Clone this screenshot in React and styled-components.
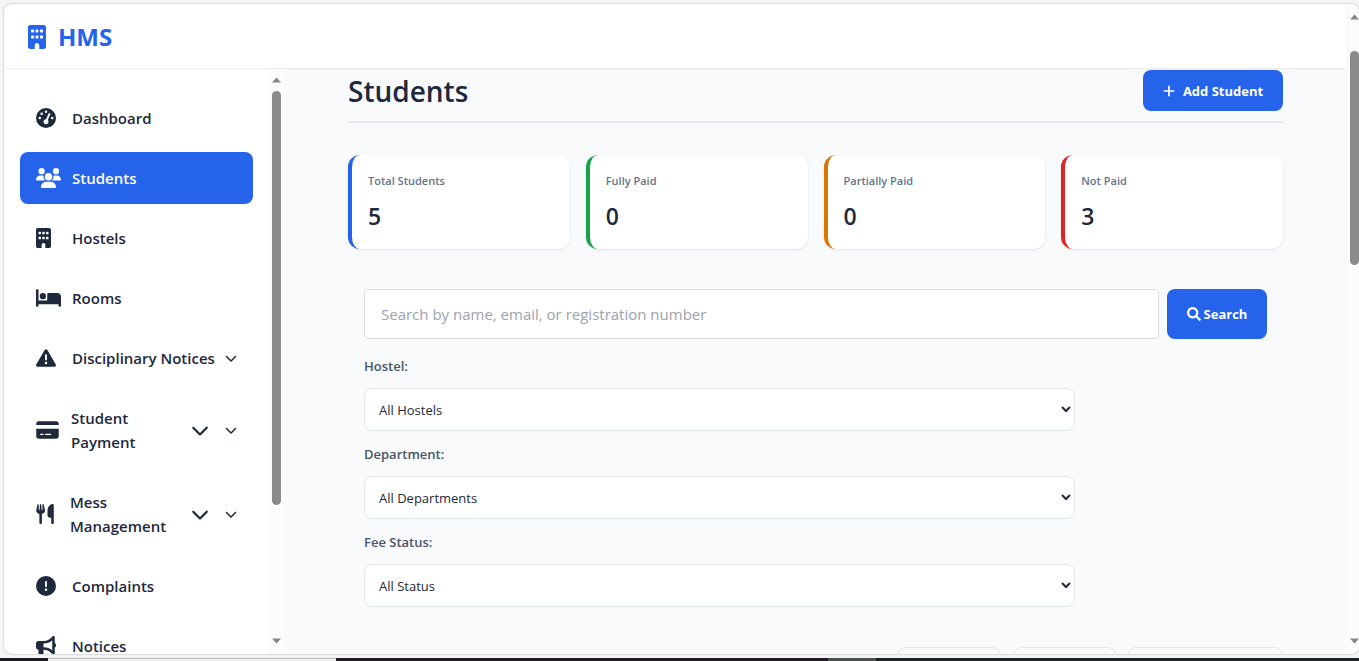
import React from "react";
import styled, { createGlobalStyle } from "styled-components";
import {
  FaBuilding, FaUsers, FaBed, FaTriangleExclamation, FaCreditCard, FaUtensils,
  FaCircleExclamation, FaBullhorn, FaChevronDown, FaPlus, FaGaugeHigh,
} from "react-icons/fa6";
import { FaSearch } from "react-icons/fa";

const GlobalStyle = createGlobalStyle`
  *, *::before, *::after { box-sizing: border-box; }
  body {
    margin: 0;
    background: #f5f5f5;
    color: #1e293b;
    font-family: "Open Sans", "Noto Sans", sans-serif;
    font-size: 15px;
    line-height: 24px;
  }
  button, input, select { font: inherit; color: inherit; }
`;

const Screen = styled.div`
  height: 100vh;
  display: flex;
  flex-direction: column;
  overflow: hidden;
`;

const Frame = styled.div`
  flex: 1;
  min-height: 0;
  margin: 4px 0 4px 4px;
  display: flex;
  background: #fff;
  border-radius: 8px;
  overflow: hidden;
  box-shadow: 0 0 2px rgba(0, 0, 0, 0.35);
`;

const Page = styled.div`
  flex: 1;
  min-width: 0;
  display: flex;
  flex-direction: column;
`;

const Header = styled.header`
  flex: none;
  height: 64px;
  padding: 0 24px;
  display: flex;
  align-items: center;
  position: relative;
  box-shadow: 0 1px 2px rgba(0, 0, 0, 0.08);
`;

const Brand = styled.a`
  display: flex;
  align-items: center;
  gap: 12px;
  padding-top: 2px;
  color: #2563eb;
  font-size: 24px;
  font-weight: 700;
  line-height: 36px;
  text-decoration: none;
`;

/* Font Awesome glyphs differ in width, so each icon takes its own. */
const IconBox = styled.span`
  flex: none;
  display: flex;
  svg {
    display: block;
    width: ${(p) => p.$width}px;
    height: ${(p) => p.$height}px;
  }
`;

const Body = styled.div`
  flex: 1;
  min-height: 0;
  display: flex;
`;

const Sidebar = styled.aside`
  flex: none;
  width: 280px;
  display: flex;
`;

const NavList = styled.nav`
  flex: 1;
  min-width: 0;
  padding: 24px 16px 0;
  display: flex;
  flex-direction: column;
  gap: 8px;
  overflow: hidden;
`;

const NavItem = styled.a`
  flex: none;
  display: flex;
  align-items: center;
  gap: 12px;
  padding: 14px 16px;
  border-radius: 8px;
  background: ${(p) => (p.$active ? "#2563eb" : "transparent")};
  color: ${(p) => (p.$active ? "#fff" : "#1e293b")};
  font-weight: 600;
  text-decoration: none;
`;

const IconSlot = styled.span`
  flex: none;
  width: ${(p) => p.$width || 24}px;
  display: flex;
`;

const NavText = styled.span`
  flex: 1;
  white-space: ${(p) => (p.$wrap ? "normal" : "nowrap")};
`;

const Arrows = styled.span`
  flex: none;
  display: flex;
  align-items: center;
  gap: 16px;
  margin-left: -12px;
`;

const ScrollTrack = styled.div`
  flex: none;
  width: ${(p) => p.$width}px;
  padding: ${(p) => p.$top}px 0 10px 3px;
  display: flex;
  flex-direction: column;
  gap: ${(p) => p.$gap}px;
  background: #fcfcfc;
`;

const ScrollArrow = styled.svg`
  flex: none;
  display: block;
  width: 9px;
  height: 6px;
  fill: #858585;
  margin-top: ${(p) => (p.$end ? "auto" : 0)};
`;

const ScrollThumb = styled.div`
  width: 9px;
  height: ${(p) => p.$size}%;
  border-radius: 5px;
  background: #8b8b8b;
`;

const Main = styled.main`
  flex: 1;
  min-width: 0;
  padding: 2px 64px 0;
  background: #f8fafc;
  overflow: hidden;
`;

const TitleRow = styled.div`
  display: flex;
  align-items: flex-start;
  justify-content: space-between;
  padding-bottom: 8px;
  border-bottom: 2px solid #e2e8f0;
`;

const Title = styled.h1`
  margin: 0;
  font-size: 28px;
  font-weight: 600;
  line-height: 43px;
`;

const PrimaryButton = styled.button`
  flex: none;
  display: flex;
  align-items: center;
  justify-content: center;
  gap: ${(p) => p.$gap}px;
  width: ${(p) => p.$width}px;
  height: ${(p) => p.$height}px;
  padding: 0;
  border: 0;
  border-radius: 8px;
  background: #2563eb;
  color: #fff;
  font-size: 13px;
  font-weight: 700;
  white-space: nowrap;
`;

const Cards = styled.section`
  display: grid;
  grid-template-columns: repeat(4, 1fr);
  gap: 16px;
  margin-top: 32px;
`;

const Card = styled.div`
  padding: 16px;
  border-left: 4px solid ${(p) => p.$color};
  border-radius: 12px;
  background: #fff;
  box-shadow: 0 1px 3px rgba(0, 0, 0, 0.1);
`;

const CardLabel = styled.div`
  color: #64748b;
  font-size: 11px;
  font-weight: 600;
  line-height: 20px;
`;

const CardValue = styled.div`
  margin-top: 8px;
  font-size: 23px;
  font-weight: 600;
  line-height: 34px;
`;

const Filters = styled.form`
  margin-top: 24px;
  padding: 16px;
`;

const SearchRow = styled.div`
  display: flex;
  gap: 8px;
  margin-bottom: 16px;
`;

const SearchInput = styled.input`
  flex: 1;
  min-width: 0;
  height: 50px;
  padding: 0 16px;
  border: 1px solid #d9dde3;
  border-radius: 4px;
  background: #fff;
  &::placeholder { color: #9ca3af; opacity: 1; }
`;

const Field = styled.div`
  display: flex;
  flex-direction: column;
  gap: 10px;
  width: calc(100% - 192px);
  & + & { margin-top: 12px; }
`;

const FieldLabel = styled.label`
  color: #475569;
  font-size: 13px;
  font-weight: 600;
  line-height: 23px;
`;

const Select = styled.select`
  height: 43px;
  padding: 0 0 0 10px;
  border: 1px solid #e2e8f0;
  border-radius: 8px;
  background: #fff;
  font-size: 13px;
`;

const ActionRow = styled.div`
  display: flex;
  justify-content: flex-end;
  gap: 12px;
  margin-top: 24px;
`;

const OutlineButton = styled.button`
  flex: none;
  width: ${(p) => p.$width}px;
  height: 40px;
  border: 1px solid #e2e8f0;
  border-radius: 8px;
  background: #f8fafc;
`;

const BottomStrip = styled.div`
  flex: none;
  height: 3px;
  display: flex;
`;

const StripPart = styled.div`
  flex: ${(p) => p.$grow} 1 0;
  background: ${(p) => p.$color};
  border-top: 1px solid ${(p) => p.$edge || p.$color};
`;

const navItems = [
  { label: "Dashboard", Icon: FaGaugeHigh, width: 20 },
  { label: "Students", Icon: FaUsers, width: 25, active: true },
  { label: "Hostels", Icon: FaBuilding, width: 15 },
  { label: "Rooms", Icon: FaBed, width: 25 },
  { label: "Disciplinary Notices", Icon: FaTriangleExclamation, width: 20, arrows: 1 },
  { label: "Student Payment", Icon: FaCreditCard, width: 23, arrows: 2, wrap: true, slot: 23 },
  { label: "Mess Management", Icon: FaUtensils, width: 18, arrows: 2, wrap: true, slot: 22 },
  { label: "Complaints", Icon: FaCircleExclamation, width: 20 },
  { label: "Notices", Icon: FaBullhorn, width: 20 },
];

const stats = [
  { label: "Total Students", value: 5, color: "#2563eb" },
  { label: "Fully Paid", value: 0, color: "#16a34a" },
  { label: "Partially Paid", value: 0, color: "#d97706" },
  { label: "Not Paid", value: 3, color: "#dc2626" },
];

const filters = [
  { id: "hostel", label: "Hostel:", option: "All Hostels" },
  { id: "department", label: "Department:", option: "All Departments" },
  { id: "fee-status", label: "Fee Status:", option: "All Status" },
];

const actions = [
  { name: "Import", width: 104 },
  { name: "Export", width: 103 },
  { name: "Download report", width: 155 },
];

const strip = [
  { grow: 48, color: "#1d1a22" },
  { grow: 288, color: "#f2f2f2", edge: "#bdbdbd" },
  { grow: 492, color: "#241a26" },
  { grow: 48, color: "#4a4f50" },
  { grow: 483, color: "#1a2424" },
];

function Scrollbar({ width, top, gap, size }) {
  return (
    <ScrollTrack $width={width} $top={top} $gap={gap} aria-hidden="true">
      <ScrollArrow viewBox="0 0 9 6"><path d="M4.5 0.5 9 5.5H0z" /></ScrollArrow>
      <ScrollThumb $size={size} />
      <ScrollArrow viewBox="0 0 9 6" $end><path d="M4.5 5.5 9 0.5H0z" /></ScrollArrow>
    </ScrollTrack>
  );
}

export default function App() {
  return (
    <Screen>
      <GlobalStyle />
      <Frame>
        <Page>
          <Header>
            <Brand href="#home">
              <IconBox $width={18} $height={24}><FaBuilding /></IconBox>
              HMS
            </Brand>
          </Header>
          <Body>
            <Sidebar>
              <NavList aria-label="Main">
                {navItems.map(({ label, Icon, width, active, arrows, wrap, slot }) => (
                  <NavItem key={label} href="#nav" $active={active}>
                    <IconSlot $width={slot}>
                      <IconBox $width={width} $height={20}><Icon /></IconBox>
                    </IconSlot>
                    <NavText $wrap={wrap}>{label}</NavText>
                    {arrows && (
                      <Arrows>
                        {arrows > 1 && (
                          <IconBox $width={18} $height={20}><FaChevronDown /></IconBox>
                        )}
                        <IconBox $width={12} $height={14}><FaChevronDown /></IconBox>
                      </Arrows>
                    )}
                  </NavItem>
                ))}
              </NavList>
              <Scrollbar width={15} top={9} gap={8} size={73} />
            </Sidebar>
            <Main>
              <TitleRow>
                <Title>Students</Title>
                <PrimaryButton type="button" $gap={8} $width={140} $height={41}>
                  <IconBox $width={12} $height={14}><FaPlus /></IconBox>
                  Add Student
                </PrimaryButton>
              </TitleRow>
              <Cards>
                {stats.map((s) => (
                  <Card key={s.label} $color={s.color}>
                    <CardLabel>{s.label}</CardLabel>
                    <CardValue>{s.value}</CardValue>
                  </Card>
                ))}
              </Cards>
              <Filters onSubmit={(e) => e.preventDefault()}>
                <SearchRow>
                  <SearchInput
                    type="text"
                    aria-label="Search students"
                    placeholder="Search by name, email, or registration number"
                  />
                  <PrimaryButton type="submit" $gap={3} $width={100} $height={50}>
                    <IconBox $width={14} $height={14}><FaSearch /></IconBox>
                    Search
                  </PrimaryButton>
                </SearchRow>
                {filters.map((f) => (
                  <Field key={f.id}>
                    <FieldLabel htmlFor={f.id}>{f.label}</FieldLabel>
                    <Select id={f.id}><option>{f.option}</option></Select>
                  </Field>
                ))}
              </Filters>
              <ActionRow>
                {actions.map((a) => (
                  <OutlineButton key={a.name} type="button" aria-label={a.name} $width={a.width} />
                ))}
              </ActionRow>
            </Main>
          </Body>
        </Page>
        <Scrollbar width={12} top={10} gap={31} size={34} />
      </Frame>
      <BottomStrip aria-hidden="true">
        {strip.map((s, i) => (
          <StripPart key={i} $grow={s.grow} $color={s.color} $edge={s.edge} />
        ))}
      </BottomStrip>
    </Screen>
  );
}
